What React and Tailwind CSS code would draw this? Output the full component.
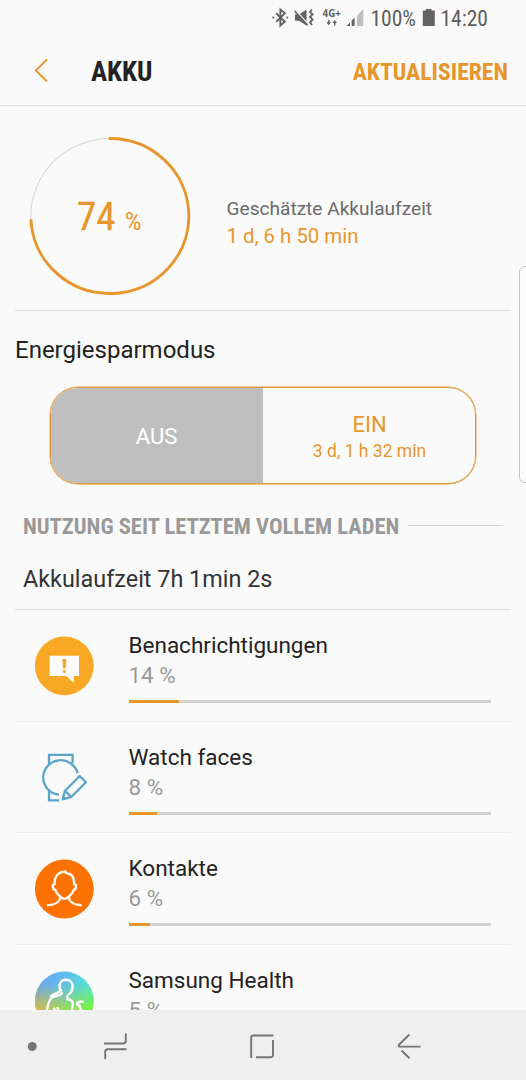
import React from "react";

const CONDENSED = "font-['Roboto_Condensed','Roboto',sans-serif] [font-stretch:75%]";

function StatusBar() {
  return (
    <div className="flex h-[37px] shrink-0 items-center pl-[270px] text-[#5e5e5e]">
      <svg className="h-[37px] w-[96px] shrink-0" viewBox="270 0 96 37" fill="none" stroke="#636363">
        <path d="M276.2 13.3 L284.8 21.8 L280.4 25.4 V9.6 L284.8 13.4 L276.2 21.8" strokeWidth="1.9" />
        <circle cx="273.3" cy="17.5" r="1.1" fill="#636363" stroke="none" />
        <circle cx="287.3" cy="17.5" r="1.1" fill="#636363" stroke="none" />
        <path d="M295 14.5 H299 L306.5 9.5 V25.5 L299 20.8 H295 Z" fill="#636363" stroke="none" />
        <path d="M295.5 10 L308.5 24.5" stroke="#fafafa" strokeWidth="1.3" />
        <path d="M294.6 11 L307.6 25.3" strokeWidth="1.7" />
        <path d="M312 9.5 l-2 2.4 2.6 2.4 -2.6 2.7 2.6 2.7 -2.6 2.7 2 2.6" strokeWidth="1.9" />
        <text x="322.6" y="17" fontSize="9.8" fontWeight="700" fill="#636363" stroke="none" textLength="18.4" lengthAdjust="spacingAndGlyphs" fontFamily="Open Sans, sans-serif">4G+</text>
        <path d="M328.7 20 v3" strokeWidth="1.5" />
        <path d="M326.3 22.3 h4.8 l-2.4 3 Z M332.3 23 h4.8 l-2.4 -3 Z" fill="#636363" stroke="none" />
        <path d="M334.7 22.5 v3" strokeWidth="1.5" />
        <path d="M346.5 26 L350 22.6 V26 Z M351.7 26 V20.6 L354.6 17.6 V26 Z" fill="#636363" stroke="none" />
        <path d="M357 26 V15.5 L363.3 9 V26 Z" fill="#c0c0c0" stroke="none" />
      </svg>
      <span className={`ml-[4.5px] w-[51.5px] shrink-0 whitespace-nowrap text-[21.5px] leading-[37px] ${CONDENSED}`}>100%</span>
      <svg className="h-[37px] w-[14px] shrink-0" viewBox="422 0 14 37" fill="#636363">
        <path d="M426 9 H431.5 V10.5 H434.8 V26 H422.8 V10.5 H426 Z" />
      </svg>
      <span className={`ml-[4.5px] whitespace-nowrap text-[21.5px] leading-[37px] ${CONDENSED}`}>14:20</span>
    </div>
  );
}

function Header() {
  return (
    <header className="flex h-[69px] shrink-0 items-center border-b border-[#e1e1e1] pr-[18px] pl-[33px]">
      <svg className="h-[28px] w-[16px]" viewBox="33 57 16 28" fill="none" stroke="#e8942a" strokeWidth="1.8">
        <path d="M47 59.5 L35.8 70.5 L47 81.5" />
      </svg>
      <h1 className={`mt-[2px] ml-[42px] text-[27px] leading-[30px] font-bold text-[#222] ${CONDENSED}`}>AKKU</h1>
      <button className={`mt-[2px] ml-auto text-[23.7px] leading-[30px] font-bold text-[#e8962c] ${CONDENSED}`}>AKTUALISIEREN</button>
    </header>
  );
}

function BatteryGauge() {
  return (
    <section className="mr-[15px] ml-[15px] flex h-[205px] shrink-0 border-b border-[#dcdcdc]">
      <svg className="mt-[24px] ml-[10px] h-[172px] w-[170px] shrink-0" viewBox="25 130 170 172" fill="none">
        <ellipse cx="110" cy="216" rx="79.2" ry="77.5" stroke="#d8d8d8" strokeWidth="1.1" />
        <path d="M108.5 138.5 H110 A79 77.5 0 1 1 30.9 219.3" stroke="#e8962c" strokeWidth="2.9" />
        <text x="77" y="230" fontSize="39.5" fill="#e8962c" stroke="#e8962c" strokeWidth="0.3" fontFamily="Roboto Condensed, Roboto" textLength="38.5" lengthAdjust="spacingAndGlyphs">74</text>
        <text x="124.8" y="229.5" fontSize="26.5" fill="#e8962c" fontFamily="Roboto Condensed, Roboto" textLength="17" lengthAdjust="spacingAndGlyphs">%</text>
      </svg>
      <div className="mt-[89px] ml-[31.5px] whitespace-nowrap">
        <div className="text-[19.1px] leading-[27px] text-[#6a6a6a]">Geschätzte Akkulaufzeit</div>
        <div className="mt-px text-[20.4px] leading-[27px] text-[#e8962c]">1 d, 6 h 50 min</div>
      </div>
    </section>
  );
}

function PowerMode() {
  return (
    <section className="shrink-0">
      <h2 className="mt-[24px] ml-[15px] text-[24px] leading-[30px] text-[#222]">Energiesparmodus</h2>
      <div className="mt-[22px] ml-[50px] flex h-[97px] w-[426px] overflow-hidden rounded-[28px] border border-[#e0993a] leading-none shadow-[0_0_0_0.5px_#e0993a]">
        <div className="flex w-[212px] items-center justify-center bg-[#bfbfbf] pt-[3px] pr-px text-[22px] text-white">AUS</div>
        <div className="flex flex-1 flex-col items-center pl-px text-[#e8962c]">
          <div className="mt-[23px] text-[22px] leading-[28px]">EIN</div>
          <div className="text-[17.5px] leading-[25px]">3 d, 1 h 32 min</div>
        </div>
      </div>
    </section>
  );
}

function NotificationIcon() {
  return (
    <svg className="h-[60px] w-[60px]" viewBox="34 636 60 60">
      <circle cx="64.3" cy="665.8" r="29.4" fill="#f9a825" />
      <path d="M49.7 655.7 H79 V676 H73.8 V683 L66.3 676 H49.7 Z" fill="#fff" />
      <path d="M62.3 659 H66.3 L65.7 668.5 H62.9 Z" fill="#f9a825" />
      <circle cx="64.3" cy="671.5" r="1.6" fill="#f9a825" />
    </svg>
  );
}

function WatchIcon() {
  return (
    <svg className="h-[60px] w-[60px]" viewBox="34 748 60 60" fill="none" stroke="#5ba5cb" strokeWidth="2.3">
      <path d="M49 764 V754.9 H72.6 V763 M77.7 773.3 A17.5 17.3 0 1 0 59 794.7 M49 791 V800.3 H59" />
      <path d="M62.7 799.3 L65 790.7 L79.7 776 L85.9 782.3 L71.3 797 Z M65 790.7 L71.3 797" strokeLinejoin="round" />
      <path d="M62.4 799.8 L63.5 795.5 L66.8 798.7 Z" fill="#5ba5cb" stroke="none" />
    </svg>
  );
}

function ContactIcon() {
  return (
    <svg className="h-[60px] w-[60px]" viewBox="34 859 60 60" fill="none" stroke="#fff8ee" strokeWidth="2.4">
      <circle cx="64.3" cy="889" r="29.4" fill="#ff7200" stroke="none" />
      <path d="M64.8 871.8 C58 872 54.3 876.5 54.6 884 C51.8 884.5 52.5 889.5 55.3 890 C56.1 893 58 894.8 60.3 896.4 L62.8 898.6 H66.3 L68.8 896.4 C71 894.8 72.8 893 73.5 890 C76.5 889.5 77 884.5 74.2 884 C74.3 877.5 71.5 874 67.5 873.5 C66 873.2 65.2 872.4 65.3 870.4" />
      <path d="M60.3 896.2 C60.2 902.5 54 905.2 47 905.2 M68.8 896.2 C69 902.5 75 905.2 81.7 905.2" />
    </svg>
  );
}

function HealthIcon() {
  return (
    <svg className="h-[60px] w-[60px]" viewBox="34 971 60 60" fill="none">
      <defs>
        <linearGradient id="health-sky" x1="0" y1="0.2" x2="1" y2="0.3">
          <stop offset="0" stopColor="#6da4ef" />
          <stop offset="0.45" stopColor="#62baf1" />
          <stop offset="1" stopColor="#51e7d2" />
        </linearGradient>
        <linearGradient id="health-ground" x1="0" y1="0" x2="1" y2="0">
          <stop offset="0" stopColor="#d0b653" />
          <stop offset="0.5" stopColor="#96d85f" />
          <stop offset="1" stopColor="#75f33e" />
        </linearGradient>
        <linearGradient id="health-fade" x1="0" y1="0" x2="0" y2="1">
          <stop offset="0.2" stopColor="#fff" stopOpacity="0" />
          <stop offset="0.62" stopColor="#fff" />
        </linearGradient>
        <mask id="health-mask" maskUnits="userSpaceOnUse" x="34" y="971" width="60" height="60">
          <rect x="34" y="971" width="60" height="60" fill="url(#health-fade)" />
        </mask>
      </defs>
      <circle cx="64.3" cy="1000.8" r="29.4" fill="url(#health-sky)" />
      <circle cx="64.3" cy="1000.8" r="29.4" fill="url(#health-ground)" mask="url(#health-mask)" />
      <g stroke="#fff" strokeWidth="2.4" strokeLinecap="round">
        <path d="M60.5 990.5 C57.8 984.5 61 979.7 65.8 979.7 C72 979.7 74 985.5 71.6 991 C70.8 993 69.8 994 68.7 994.4" />
        <path d="M61.2 990.5 C58.6 993 55.5 992.5 51.3 996 M61.8 993.2 C59.5 996 54.8 996 51.8 997.5 C49.2 1000 47.7 1004 46.5 1013" />
        <path d="M67.4 996.5 L67.3 999.3 C70.5 999.3 72.6 1001 72.8 1004 L71.8 1013 M54 1008.8 L56.8 1012 M57.5 1008 L60 1012" />
        <path d="M83 1001.8 C79.5 1001 76.5 1002.5 77 1004.5 C77.6 1006 80.5 1004.5 79.5 1007 L82.5 1012" />
      </g>
    </svg>
  );
}

const APPS = [
  { name: "Benachrichtigungen", percent: 14, Icon: NotificationIcon },
  { name: "Watch faces", percent: 8, Icon: WatchIcon },
  { name: "Kontakte", percent: 6, Icon: ContactIcon },
  { name: "Samsung Health", percent: 5, Icon: HealthIcon },
];

function AppRow({ name, percent, Icon }) {
  return (
    <li className="mr-[15px] ml-[15px] flex h-[111.67px] shrink-0 border-b border-[#ededed]">
      <div className="mt-[26px] ml-[19px] h-[60px] w-[60px] shrink-0">
        <Icon />
      </div>
      <div className="mt-[20px] ml-[34.5px] w-[362px]">
        <div className="text-[22.5px] leading-[31px] text-[#222]">{name}</div>
        <div className="text-[22.4px] leading-[28px] text-[#999]">{percent} %</div>
        <div className="mt-[11px] h-[3px] bg-[#d2d2d2]">
          <div className="h-full bg-[#e8962c]" style={{ width: `${percent}%` }} />
        </div>
      </div>
    </li>
  );
}

function Usage() {
  return (
    <section className="flex min-h-0 flex-1 flex-col overflow-hidden">
      <div className="mt-[27px] ml-[23px] flex h-[30px] shrink-0 items-center">
        <h2 className={`w-[385px] whitespace-nowrap text-[22.5px] leading-[30px] font-bold text-[#999] ${CONDENSED}`}>NUTZUNG SEIT LETZTEM VOLLEM LADEN</h2>
        <div className="-mt-[2px] h-px w-[95px] bg-[#d5d5d5]" />
      </div>
      <p className="mt-[23px] ml-[23px] shrink-0 text-[23.4px] leading-[30px] text-[#333]">Akkulaufzeit 7h 1min 2s</p>
      <div className="mx-[15px] mt-[15px] h-px shrink-0 bg-[#dcdcdc]" />
      <ul className="flex flex-col">
        {APPS.map((app) => (
          <AppRow key={app.name} {...app} />
        ))}
      </ul>
    </section>
  );
}

function NavBar() {
  return (
    <nav className="h-[70px] shrink-0 bg-[#efefef]">
      <svg className="h-[70px] w-full" viewBox="0 1010 526 70" fill="none" stroke="#747474" strokeWidth="1.9">
        <circle cx="32.2" cy="1046.5" r="4.5" fill="#747474" stroke="none" />
        <path d="M104 1043.5 H123 Q125.8 1043.5 125.8 1041 V1033.5 M126.5 1049.2 H107.8 Q105.2 1049.2 105.2 1052 V1059" />
        <path d="M251.2 1058 V1037.5 Q251.2 1035.5 253.2 1035.5 H273.5 M273 1040 V1054.8 Q273 1057.3 270.5 1057.3 H256" />
        <path d="M409.4 1034.5 L398.9 1044.8 Q398.2 1046.6 400 1046.6 H420.5 M401.5 1050.5 L409.5 1058.3" />
      </svg>
    </nav>
  );
}

export default function App() {
  return (
    <div className="relative flex h-[1080px] w-[526px] flex-col overflow-hidden bg-[#fafafa] font-['Roboto',sans-serif]">
      <StatusBar />
      <Header />
      <BatteryGauge />
      <PowerMode />
      <Usage />
      <NavBar />
      <div className="absolute top-[266px] -right-[2px] h-[217px] w-[9px] rounded-l-[6px] border border-[#c4c4c4] bg-[#fbfbfb]" />
    </div>
  );
}
